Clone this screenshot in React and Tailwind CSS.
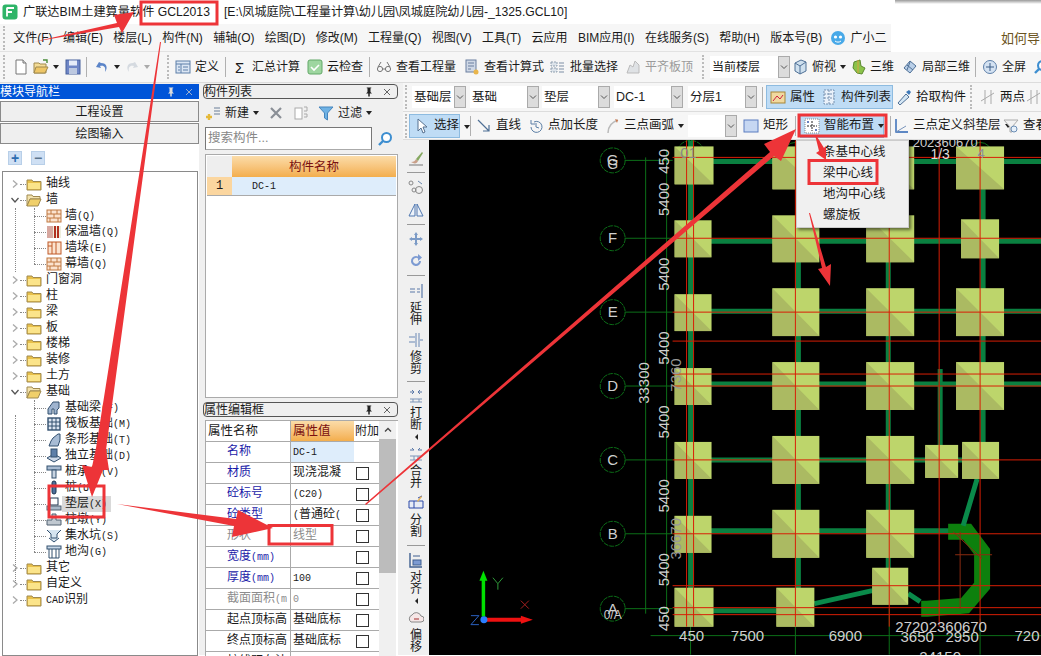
import React from 'react';

// ---- small toolbar / tree icons, all 16x16
function Ic({ n, c = 'w-4 h-4' }) {
  const p = {
    folder: <><path d="M1 4h5l1 1.500h8v8.500H1z" fill="#e8c04a" stroke="#a08a50" /><path d="M2 7h12v6H2z" fill="#fbe48a" /></>,
    folderOpen: <><path d="M1 3h5l1 1.500h7V7H4L1 14z" fill="#f3e2ac" stroke="#a08a50" /><path d="M4 7h11l-3 7H1z" fill="#f0cf6a" stroke="#a08a50" /></>,
    brick: <><rect x="1" y="2" width="14" height="12" fill="#fbe3cf" stroke="#c07840" /><path d="M1 6h14M1 10h14M5 2v4M11 2v4M8 6v4M4 10v4M12 10v4" stroke="#c07840" fill="none" /></>,
    insul: <><rect x="1" y="2" width="14" height="12" fill="#eed" /><rect x="1" y="2" width="6" height="12" fill="#d7a8a0" /><path d="M9 2v12M12 2v12" stroke="#b03020" strokeWidth="2" /></>,
    pier: <><rect x="2" y="2" width="13" height="12" fill="#fbe3cf" stroke="#c05a28" /><path d="M6 2v12M10 2v12M2 6h4" stroke="#c05a28" /></>,
    beam: <><path d="M2 14V9l5-7h6v6l-2 2v4H8V9H6v5z" fill="#9fb4cf" stroke="#33506f" /></>,
    raft: <><rect x="2" y="2" width="12" height="12" fill="#dde6f2" stroke="#33506f" strokeWidth="1.400" /><path d="M6 2v12M10 2v12M2 6h12M2 10h12" stroke="#33506f" /></>,
    strip: <><path d="M3 14l2-5 2-3 5-4h2v6l-2 6z" fill="#a8bcd4" stroke="#33506f" /></>,
    iso: <><path d="M1 10l7-4 7 4-7 4z" fill="#cbd8e8" stroke="#33506f" /><rect x="5" y="1" width="6" height="8" fill="#5d7fa8" stroke="#33506f" /></>,
    cap: <><rect x="1" y="2" width="14" height="4" fill="#a9bcd2" stroke="#33506f" /><rect x="6" y="6" width="4" height="8" fill="#c8d4e2" stroke="#33506f" /></>,
    pile: <><rect x="6" y="1" width="4" height="13" rx="2" fill="#4d6f9a" stroke="#1e3550" /></>,
    pad: <><rect x="4" y="2" width="8" height="7" fill="#fff" stroke="#1e3550" /><rect x="1" y="10" width="14" height="4" fill="#a8b8c8" stroke="#506070" /></>,
    pier2: <><path d="M6 2h4v6h5v5H1V8h5z" fill="#c0c8d0" stroke="#506070" /></>,
    pit: <><path d="M1 2l4 4v4h6V6l4-4M3 10l5 4 5-4" fill="#d5e4f0" stroke="#33506f" /></>,
    ditch: <><rect x="1" y="2" width="14" height="3" fill="#c8d8e8" stroke="#33506f" /><path d="M3 5v9h10V5M6 5v9M10 5v9" fill="none" stroke="#33506f" /></>,
    page: <><path d="M3 1h7l3 3v11H3z" fill="#fff" stroke="#777" /><path d="M10 1v3h3" fill="#ddd" stroke="#777" /></>,
    open: <><path d="M1 4h5l1 1h6v9H1z" fill="#f4dc96" stroke="#a08a50" /><path d="M3 8h12l-3 6H1z" fill="#eec667" stroke="#a08a50" /><path d="M10 1h4v3" fill="none" stroke="#4a8c3a" strokeWidth="1.400" /></>,
    save: <><rect x="1" y="1" width="14" height="14" fill="#6f86c6" stroke="#47609c" /><rect x="4" y="1.500" width="8" height="5" fill="#e6ecf8" /><rect x="4" y="9" width="8" height="6" fill="#bcc8e0" /></>,
    undo: <><path d="M5 3l-3 5 5 1-1-2c4-1 6 1 5 6 3-4 2-9-4-9z" fill="#5b84c8" /></>,
    redo: <><path d="M11 3l3 5-5 1 1-2c-4-1-6 1-5 6-3-4-2-9 4-9z" fill="#d5dae0" /></>,
    def: <><rect x="1" y="2" width="14" height="12" fill="#dbe6f4" stroke="#5d7fa8" /><path d="M1 5h14M6 5v9M3 8h2M3 11h2M8 8h5M8 11h5" stroke="#5d7fa8" fill="none" /></>,
    cloud: <><rect x="1" y="1" width="14" height="14" rx="2" fill="#9ed6a0" stroke="#63a868" /><path d="M4 8l3 3 5-5" stroke="#fff" strokeWidth="1.600" fill="none" /></>,
    glasses: <><circle cx="4" cy="10" r="2.600" fill="none" stroke="#777" /><circle cx="12" cy="10" r="2.600" fill="none" stroke="#777" /><path d="M6 10h4M2 8l3-5M14 8l-3-5" stroke="#777" fill="none" /></>,
    calc: <><rect x="2" y="1" width="10" height="12" fill="#cfd8e6" stroke="#6b7f9f" /><path d="M4 4h6M4 7h6M4 10h3" stroke="#6b7f9f" /><circle cx="12" cy="13" r="2.500" fill="#e9b54b" /></>,
    batch: <><path d="M1 3h6v4H1zM1 9h6v4H1z" fill="#dce3ea" stroke="#90a0b0" strokeDasharray="2 1" /><path d="M9 4h5M9 7h5M9 10h5M9 13h5" stroke="#7d8ea5" /></>,
    level: <><path d="M2 14l3-8 3 2 2-6 4 4v8z" fill="#dfe2e5" stroke="#bbb" /></>,
    box: <><path d="M3 4l6-3 5 2v9l-6 3-5-3z" fill="#cfe0ee" stroke="#4f7096" /><path d="M3 4l5 3v8M8 7l6-4" stroke="#4f7096" fill="none" /></>,
    d3: <><path d="M4 3l6-2 1 6 4 2-3 6-5-1-4-5z" fill="#8bc34a" stroke="#5c8a30" /><path d="M8 1v13" stroke="#d9a441" /></>,
    part: <><path d="M2 9l6-7 6 5-6 7z" fill="#b9cfe8" stroke="#4f7096" /><path d="M5 6l6 5M8 3l-3 8" stroke="#4f7096" fill="none" /></>,
    full: <><circle cx="8" cy="8" r="6.500" fill="#d4e2f2" stroke="#5d7fa8" /><path d="M8 4v8M4 8h8" stroke="#3d5f88" /></>,
    attr: <><rect x="1" y="3" width="14" height="11" fill="#f1d99f" stroke="#a78537" /><path d="M3 12l4-5 3 3 3-4" stroke="#c24" fill="none" /></>,
    list: <><rect x="3" y="1" width="10" height="14" fill="#eaf1fa" stroke="#7590b0" strokeDasharray="2 1" /><path d="M8 1v14M3 5h10M3 9h10" stroke="#7590b0" strokeDasharray="2 1" /></>,
    pick: <><path d="M2 14l8-9 3 3-9 8z" fill="#d4e6f4" stroke="#4f7096" /><path d="M10 3l3-2 2 2-2 3z" fill="#3d78b8" /></>,
    twop: <><path d="M1 12L14 4M5 1v14M11 1v14" stroke="#aaa" fill="none" /></>,
    arrow: <><path d="M4 1v12l3-3 2 5 2-1-2-5h4z" fill="#fff" stroke="#56708f" /></>,
    line: <><path d="M2 2l11 11M13 7v6H7" stroke="#4f7096" strokeWidth="1.200" fill="none" /></>,
    ext: <><path d="M3 9a5.500 5.500 0 1 0 3-5" stroke="#5c7fa5" fill="none" /><path d="M8 5v4l3 1M3 2v4h4" stroke="#5c7fa5" fill="none" /></>,
    arc: <><path d="M4 15C4 8 8 4 14 2" stroke="#bbb" strokeWidth="1.600" fill="none" /><path d="M11 1l3 1-1 3" fill="#c97a50" /></>,
    rect: <><rect x="1" y="2" width="14" height="12" fill="#c6d7f2" stroke="#5b7cc0" /></>,
    smart: <><rect x="1" y="1" width="14" height="14" fill="#fff" stroke="#888" strokeDasharray="1 1" /><path d="M8 3v10M3 8h10" stroke="#222" strokeDasharray="2 1" /><circle cx="4" cy="4" r="1" fill="#35a" /><circle cx="12" cy="12" r="1" fill="#35a" /></>,
    slope: <><path d="M3 1v13h12" stroke="#2c64b4" strokeWidth="1.400" fill="none" /><path d="M3 14L13 8" stroke="#7a95bc" fill="none" /></>,
    view: <><path d="M1 2h14L9 9v5H7V9z" fill="#f2f2f2" stroke="#aaa" /><circle cx="11" cy="11" r="3" fill="#e6f0fa" stroke="#6a8db5" /></>,
    add: <><path d="M9 3h6M9 6h6M9 9h6" stroke="#6a7f98" /><path d="M4 9v6M1 12h6" stroke="#e5b93a" strokeWidth="2.400" /></>,
    del: <><path d="M3 3l10 10M13 3L3 13" stroke="#8a8f96" strokeWidth="2.200" /></>,
    copy: <><rect x="2" y="3" width="7" height="11" fill="#fff" stroke="#aaa" /><path d="M11 2h3v4h-3M11 9h3v3h-3" fill="none" stroke="#aaa" /></>,
    filter: <><path d="M1 2h14L9.500 8v7l-3-2V8z" fill="#6fb2e4" stroke="#4585bd" /></>,
    search: <><circle cx="9.500" cy="6.500" r="4.500" fill="#fff" stroke="#3d8ed0" strokeWidth="2" /><path d="M6 10l-4 4" stroke="#3d8ed0" strokeWidth="2.400" /></>,
    brush: <><path d="M3 12c3 0 4-1 5-3l2 2c-1 3-4 3-7 1z" fill="#c9a08a" /><path d="M8 9l6-7 1 1-5 8z" fill="#85a860" /><path d="M1 15h14" stroke="#777" /></>,
    circles: <><circle cx="3" cy="4" r="2" fill="none" stroke="#888" /><circle cx="11" cy="11" r="3.500" fill="none" stroke="#888" /><circle cx="6" cy="11" r="2" fill="none" stroke="#888" /><path d="M10 2l4 3" stroke="#6a88ad" /></>,
    mirror: <><path d="M7 2v12H1zM9 2v12h6z" fill="#eef3fa" stroke="#4f77b0" /></>,
    move: <><path d="M8 1l2 3H9v3h3V6l3 2-3 2V9H9v3h1l-2 3-2-3h1V9H4v1L1 8l3-2v1h3V4H6z" fill="#7c9bc6" /></>,
    rotate: <><path d="M13 8a5 5 0 1 1-3-4.600V1l4 3.500L10 8V5.600A3 3 0 1 0 11 8z" fill="#7d9bd2" /></>,
    extend: <><path d="M14 1v14M2 6h5M2 9h5M9 6h3M9 9h3" stroke="#5a78a8" strokeWidth="1.200" fill="none" /></>,
    trim: <><path d="M8 1v14M11 1v14M1 5h6M1 10h6M12 8h3" stroke="#6a88b5" fill="none" /></>,
    brk: <><path d="M2 11h12M2 14h12M5 11v3M11 11v3" stroke="#7d95b8" /><path d="M2 4h4M10 4h4M6 4l-2-2M6 4L4 6M10 4l2-2M10 4l2 2" stroke="#5a78a8" fill="none" /></>,
    merge: <><path d="M2 10h12M2 14h12M6 10v4M10 10v4" stroke="#7d95b8" /><path d="M2 4h4l-2-2M14 4h-4l2-2" stroke="#5a78a8" fill="none" /></>,
    split: <><path d="M1 6h14v7H1z" fill="#e8ecf5" stroke="#2b48a8" /><path d="M6 6v7M10 3l4-2" stroke="#2b48a8" /><path d="M9 6l4-5 1 1-4 5z" fill="#e6b45a" /></>,
    align: <><path d="M2 1v14h12" stroke="#3f5f90" strokeWidth="1.400" fill="none" /><rect x="5" y="8" width="8" height="5" fill="#7d9bd2" stroke="#3f5f90" /><path d="M5 4h7" stroke="#3f5f90" /></>,
    offset: <><path d="M3 12a4 4 0 0 1 1-7 5 5 0 0 1 9 1 3 3 0 0 1 0 6z" fill="#f5e6e6" stroke="#888" /><path d="M6 9h5" stroke="#c88" strokeWidth="2" /></>,
    bot: <><circle cx="8" cy="8" r="7" fill="#48a9e8" /><circle cx="5.500" cy="7" r="1.600" fill="#fff" /><circle cx="10.500" cy="7" r="1.600" fill="#fff" /><path d="M5 11c2 1.500 4 1.500 6 0" stroke="#fff" fill="none" /></>,
    logo: <><rect x="0.500" y="0.500" width="15" height="15" rx="3" fill="#2fb568" /><path d="M5 3.500v9M5 4h7M5 8h5" stroke="#fff" strokeWidth="1.800" fill="none" /></>,
    pin: <><path d="M5 2h6v1H10v5l2 2H9v4H7v-4H4l2-2V3H5z" fill="#222" /></>,
    close: <><path d="M4 4l8 8M12 4l-8 8" stroke="#333" /></>,
  };
  return <svg viewBox="0 0 16 16" className={`${c} shrink-0`}>{p[n]}</svg>;
}

// little solid dropdown triangle
const Caret = ({ gray }) => <span className={`inline-block shrink-0 border-x-[3.5px] border-t-[4px] border-x-transparent ${gray ? 'border-t-[#aaa]' : 'border-t-[#222]'}`} />;

const Sep = ({ w = 'w-px' }) => <div className={`h-5 shrink-0 ${w}`}><div className="w-px h-full bg-[#b0b0b0]" /></div>;
const Grip = ({ w = 'w-[2px]' }) => <div className={`h-6 shrink-0 ${w}`}><div className="h-full w-0 border-l-2 border-dotted border-[#bbb]" /></div>;

// toolbar button, w is the slot it takes in the row
function Tool({ icon, label, caret, w, gray }) {
  return (
    <div className={`flex items-center gap-1 shrink-0 whitespace-nowrap ${w || ''} ${gray ? 'text-[#9a9a9a]' : ''}`}>
      {icon && <Ic n={icon} />}
      {label && <span>{label}</span>}
      {caret && <Caret gray={gray} />}
    </div>
  );
}

function Combo({ label, w }) {
  return (
    <div className={`flex items-center h-[22px] bg-white shrink-0 ${w}`}>
      <span className="flex-1 pl-0.5 whitespace-nowrap overflow-hidden">{label}</span>
      <span className="w-[12px] h-[22px] bg-[#dcdcdc] border border-[#aaa] flex items-center justify-center">
        <svg viewBox="0 0 8 8" className="w-2 h-2"><path d="M1 2.500l3 3 3-3" fill="none" stroke="#555" /></svg>
      </span>
    </div>
  );
}

// ascii is half width in the old bitmap font, so it gets a smaller size
function Mono({ t }) {
  return t.split(/([\x20-\x7e]+)/).map((s, i) => (i % 2 ? <span key={i} className="text-[10px]">{s}</span> : s));
}

const menus = ['文件(F)', '编辑(E)', '楼层(L)', '构件(N)', '辅轴(O)', '绘图(D)', '修改(M)', '工程量(Q)', '视图(V)', '工具(T)', '云应用', 'BIM应用(I)', '在线服务(S)', '帮助(H)', '版本号(B)'];

const tree = [
  [0, '轴线'], [0, '墙', 1], [1, '墙(Q)', 'brick'], [1, '保温墙(Q)', 'insul'], [1, '墙垛(E)', 'pier'], [1, '幕墙(Q)', 'brick'],
  [0, '门窗洞'], [0, '柱'], [0, '梁'], [0, '板'], [0, '楼梯'], [0, '装修'], [0, '土方'], [0, '基础', 1],
  [1, '基础梁(F)', 'beam'], [1, '筏板基础(M)', 'raft'], [1, '条形基础(T)', 'strip'], [1, '独立基础(D)', 'iso'], [1, '桩承台(V)', 'cap'],
  [1, '桩(U)', 'pile'], [1, '垫层(X)', 'pad', 1], [1, '柱墩(Y)', 'pier2'], [1, '集水坑(S)', 'pit'], [1, '地沟(G)', 'ditch'],
  [0, '其它'], [0, '自定义'], [0, 'CAD识别'],
];

function TreeRow({ row }) {
  const [lvl, label, extra, sel] = row;
  if (lvl === 0) {
    return (
      <div className="h-4 flex items-center">
        <svg viewBox="0 0 8 8" className="w-2 h-2 ml-[8px] shrink-0">
          {extra ? <path d="M0.500 2l3.500 4 3.500-4" fill="none" stroke="#555" strokeWidth="1.300" /> : <path d="M2 0.500l4 3.500-4 3.500" fill="none" stroke="#aaa" strokeWidth="1.300" />}
        </svg>
        <span className="w-[6px] ml-px border-t border-dotted border-[#888]" />
        <Ic n={extra ? 'folderOpen' : 'folder'} />
        <span className="ml-[4px]"><Mono t={label} /></span>
      </div>
    );
  }
  return (
    <div className="h-4 flex items-center pl-[31px]">
      <span className="w-3 border-t border-dotted border-[#888]" />
      <Ic n={extra} />
      <span className={`pl-[3px] pr-1 h-4 flex items-center ${sel ? 'bg-[#d9d9d9]' : ''}`}><span><Mono t={label} /></span></span>
    </div>
  );
}

function PanelHead({ title, blue }) {
  return (
    <div className={`h-[15px] flex items-center justify-between shrink-0 ${blue ? 'bg-[#0054d8] text-white' : 'bg-[#efefef] border border-[#555] rounded-sm'}`}>
      <span>{title}</span>
      <div className={`flex items-center gap-1.5 pr-1 ${blue ? 'invert' : ''}`}>
        <Ic n="pin" c="w-3 h-3" />
        <Ic n="close" c="w-3 h-3" />
      </div>
    </div>
  );
}

const props = [
  ['名称', 'DC-1', 'b', true, true], ['材质', '现浇混凝', 'b'], ['砼标号', '(C20)', 'b'], ['砼类型', '(普通砼(', 'b'], ['形状', '线型', 'g'],
  ['宽度(mm)', '', 'b'], ['厚度(mm)', '100', 'b'], ['截面面积(m', '0', 'g'], ['起点顶标高', '基础底标', 'k'], ['终点顶标高', '基础底标', 'k'], ['桩线距布法', '', 'k'],
];

function VTool({ icon, text, caret }) {
  return (
    <div className="flex flex-col items-center shrink-0 leading-[12px]">
      <Ic n={icon} />
      {text && <div className="mt-[3px] flex flex-col items-center">{text.split('').map((t) => <span key={t}>{t}</span>)}</div>}
      {caret && <span className="mt-[3px] border-y-[3px] border-r-[3px] border-y-transparent border-r-[#222]" />}
    </div>
  );
}
const VSep = () => <div className="w-[18px] h-px bg-[#999] shrink-0" />;

// ---- the drawing area, coordinates are page pixels via viewBox
const SQ = [
  [674, 147, 39, 38], [674, 221, 37, 37], [674, 295, 37, 37], [674, 369, 37, 37], [674, 443, 37, 37], [674, 517, 37, 37], [674, 589, 39, 39],
  [772, 147, 47, 43], [772, 216, 47, 47], [772, 289, 47, 48], [772, 363, 47, 48], [772, 437, 47, 48], [772, 511, 47, 48], [776, 589, 38, 39],
  [866, 147, 48, 43], [866, 216, 48, 47], [866, 289, 48, 48], [866, 363, 48, 48], [866, 437, 48, 48], [866, 511, 48, 48], [872, 569, 36, 37],
  [956, 147, 48, 43], [961, 220, 38, 39], [956, 289, 48, 48], [956, 363, 48, 48], [962, 443, 37, 37], [925, 446, 33, 33],
];
const BEAMS = [[690, 141, 690, 612], [798, 190, 798, 590], [888, 190, 888, 570], [983, 190, 983, 445], [940, 370, 940, 461],
  [700, 162, 1041, 162], [700, 242, 1041, 242], [700, 312, 1041, 312], [700, 385, 1041, 385], [700, 461, 962, 461], [700, 532, 960, 532], [700, 612, 776, 612]];
const REDH = [158, 239, 313, 342, 375, 387, 461, 535, 587, 609, 616];
const REDV = [686, 693, 795, 889, 939, 980];
const AXES = [['G', 161], ['F', 239], ['E', 313], ['D', 387], ['C', 461], ['B', 535], ['A', 610]];
const DIM = [['450', 162], ['5400', 200], ['5400', 275], ['5400', 349], ['5400', 423], ['5400', 497], ['5400', 571], ['450', 620]];
const BOT = [['450', 691, 637], ['7500', 747, 637], ['6900', 845, 637], ['27202360670', 941, 628], ['3650', 917, 638], ['2950', 962, 638], ['720', 1027, 637], ['24150', 940, 658]];

function Drawing() {
  return (
    <svg viewBox="428 141 613 515" className="flex-1 min-w-0 h-full bg-black">
      <g stroke="#0c6f18" fill="none">
        <path d="M624 161H672M624 239H672M624 313H672M624 387H672M624 461H672M624 535H672M624 610H672M645 158V615M666 150V620" />
        <path d="M690 625V656M795 628V656M889 610V656M980 620V656M650 637H1041" />
        {AXES.map(([t, y]) => <circle key={t} cx="612" cy={y} r="12.500" strokeDasharray="5 1" />)}
        <circle cx="690" cy="155" r="14" strokeDasharray="5 1" /><circle cx="795" cy="155" r="12" /><circle cx="980" cy="155" r="12" />
      </g>
      {BEAMS.map(([a, b, c, d], i) => <line key={i} x1={a} y1={b} x2={c} y2={d} stroke="#0a8040" strokeWidth="5" />)}
      <path d="M948 533H967L982 553V587L965 607L927 610H921" fill="none" stroke="#0d800d" strokeWidth="16" />
      <path d="M977 480L963 527M814 605L872 592M908 595L920 603" stroke="#0a8a4a" strokeWidth="5" fill="none" />
      {SQ.map(([x, y, w, h], i) => (
        <g key={i}>
          <rect x={x} y={y} width={w} height={h} fill="#bdd56b" />
          <path d={`M${x} ${y}V${y + h}H${x + w}z`} fill="#abba62" />
        </g>
      ))}
      <g stroke="#d81e05" strokeWidth="1">
        {REDH.map((y) => <line key={y} x1="672" y1={y} x2="1041" y2={y} />)}
        {REDV.map((x) => <line key={x} x1={x} y1="141" x2={x} y2="628" />)}
        <path d="M960 533V610M953 533L982 560M955 556H992" fill="none" stroke="#8a2a10" />
      </g>
      <g fill="#cfcfcf" className="font-['Liberation_Sans',sans-serif]" fontSize="15">
        {AXES.map(([t, y]) => <text key={t} x="612" y={y + 5} textAnchor="middle">{t}</text>)}
        <text x="612" y="170" textAnchor="middle" fontSize="14">G</text>
        <text x="612" y="620" textAnchor="middle" fontSize="12">0/A</text>
        {DIM.map(([t, y], i) => <text key={i} transform={`translate(668 ${y}) rotate(-90)`} textAnchor="middle">{t}</text>)}
        <text transform="translate(648 384) rotate(-90)" textAnchor="middle">33300</text>
        <text transform="translate(680 376) rotate(-90)" textAnchor="middle" fill="#999">7360</text>
        <text transform="translate(680 540) rotate(-90)" textAnchor="middle" fill="#999">36670</text>
        {BOT.map(([t, x, y], i) => <text key={i} x={x} y={y + 5} textAnchor="middle">{t}</text>)}
        <text x="688" y="159" textAnchor="middle" fill="#888">01</text>
        <text x="981" y="159" textAnchor="middle" fill="#8b8fa0" fontSize="13">4</text>
        <text x="940" y="160" textAnchor="middle" fill="#ddd" fontSize="14">1/3</text>
        <text x="945" y="148" textAnchor="middle" fill="#ccc" fontSize="13">202360670</text>
      </g>
      {/* ucs marker */}
      <path d="M482.500 618V580" stroke="#00e000" strokeWidth="3.500" />
      <path d="M482.500 572l-4 10h8z" fill="#00e000" />
      <path d="M483 621H522" stroke="#ee1111" strokeWidth="4" />
      <path d="M532 621l-12-4v8z" fill="#ee1111" />
      <circle cx="483" cy="621" r="3.500" fill="#2a7fff" />
      <path d="M492 579l5 6 5-6M497 585v6" stroke="#2f9a3a" fill="none" />
      <path d="M520 602l8 8M528 602l-8 8" stroke="#a82020" fill="none" />
      <path d="M470 617h8l-8 9h8" stroke="#2a60c0" fill="none" />
    </svg>
  );
}

export default function App() {
  return (
    <div className="relative w-[1041px] h-[656px] overflow-hidden bg-white text-[12px] leading-none text-[#1a1a1a] font-['Liberation_Sans','Noto_Sans_CJK_SC',sans-serif]">
      {/* title */}
      <div className="h-[24px] flex items-center pl-[2px] bg-white text-[12.2px] whitespace-nowrap">
        <Ic n="logo" />
        <span className="ml-[5px]">广联达BIM土建算量软件 GCL2013</span>
        <span className="ml-[14px]">[E:\凤城庭院\工程量计算\幼儿园\凤城庭院幼儿园-_1325.GCL10]</span>
      </div>
      <div className="absolute left-[895px] top-0 right-0 h-[4px] bg-linear-to-b from-[#9a9a9a] to-white" />
      {/* menu */}
      <div className="h-[28px] flex items-center">
        <div className="w-[891px] h-full flex items-center gap-[10.3px] shrink-0 pl-[3px] bg-[#f6f6f6] border-b border-[#e2e2e2]">
          <Grip w="w-[0px]" />
          {menus.map((m) => <span key={m} className="shrink-0 first:ml-[0px]">{m}</span>)}
          <span className="flex items-center gap-1 shrink-0 ml-[-2px]"><Ic n="bot" />广小二</span>
        </div>
        <span className="ml-[110px] shrink-0 whitespace-nowrap text-[13px] text-[#6b5320]">如何导出</span>
      </div>
      <div className="h-[31px] flex items-center pl-[3px] bg-[#f6f6f6] border-b border-[#dcdcdc]">
        <Grip w="w-[10px]" />
        <Tool icon="page" w="w-[20px]" />
        <Tool icon="open" caret w="w-[32px]" />
        <Tool icon="save" w="w-[21px]" />
        <Sep w="w-[8px]" />
        <Tool icon="undo" caret w="w-[30px]" />
        <Tool icon="redo" caret gray w="w-[43px]" />
        <Grip w="w-[8px]" />
        <Tool icon="def" label="定义" w="w-[50px]" />
        <Sep w="w-[10px]" />
        <span className="w-[17px] text-[15px] shrink-0">Σ</span>
        <Tool label="汇总计算" w="w-[55px]" />
        <Tool icon="cloud" label="云检查" w="w-[62px]" />
        <Sep w="w-[7px]" />
        <Tool icon="glasses" label="查看工程量" w="w-[88px]" />
        <Tool icon="calc" label="查看计算式" w="w-[86px]" />
        <Tool icon="batch" label="批量选择" w="w-[75px]" />
        <Tool icon="level" label="平齐板顶" gray w="w-[77px]" />
        <Grip w="w-[8px]" />
        <div className="w-[82px] shrink-0"><Combo label="当前楼层" w="w-[80px]" /></div>
        <Tool icon="box" label="俯视" caret w="w-[58px]" />
        <Tool icon="d3" label="三维" w="w-[52px]" />
        <Tool icon="part" label="局部三维" w="w-[73px]" />
        <Sep w="w-[7px]" />
        <Tool icon="full" label="全屏" w="w-[51px]" />
        <Ic n="search" />
      </div>

      <div className="flex h-[572px] bg-[#f0f0f0]">
        {/* module nav */}
        <div className="w-[199px] h-full flex flex-col shrink-0 mt-[1px] bg-white">
          <PanelHead title="模块导航栏" blue />
          <div className="h-[21px] mt-[2px] flex items-center justify-center bg-[#efefef] border border-[#8a8a8a]">工程设置</div>
          <div className="h-[21px] mt-px flex items-center justify-center bg-[#efefef] border border-[#8a8a8a]">绘图输入</div>
          <div className="h-[27px] flex items-center gap-[9px] pl-2 shrink-0">
            <span className="w-[14px] h-[14px] bg-[#cfe0f4] border border-[#b8cfe8] flex items-center justify-center text-[#2b6cb0] text-[14px] font-bold">+</span>
            <span className="w-[14px] h-[14px] bg-[#cfe0f4] border border-[#b8cfe8] flex items-center justify-center text-[#5b7590] text-[14px] font-bold">−</span>
          </div>
          <div className="relative flex-1 ml-[2px] mr-[1px] border border-[#8a8a8a] pt-[1px] font-['Liberation_Mono','Noto_Sans_CJK_SC',monospace]">
            <div className="h-[3px]" />
            <span className="absolute left-[12px] top-[36px] h-[64px] border-l border-dotted border-[#888]" />
            <span className="absolute left-[12px] top-[243px] h-[168px] border-l border-dotted border-[#888]" />
            <span className="absolute left-[31px] top-[36px] h-[56px] border-l border-dotted border-[#888]" />
            <span className="absolute left-[31px] top-[228px] h-[152px] border-l border-dotted border-[#888]" />
            {tree.map((r) => <TreeRow key={r[1]} row={r} />)}
          </div>
        </div>

        {/* component list + properties */}
        <div className="w-[195px] ml-[4px] mt-[1px] flex flex-col shrink-0 h-full">
          <div className="h-[314px] flex flex-col shrink-0">
            <PanelHead title="构件列表" />
            <div className="h-[28px] flex items-center gap-[9px] pl-[2px] shrink-0">
              <Tool icon="add" label="新建" caret />
              <Ic n="del" />
              <Ic n="copy" />
              <Tool icon="filter" label="过滤" caret />
            </div>
            <div className="h-[23px] flex shrink-0 ml-[2px]">
              <div className="w-[167px] bg-white border border-[#777] border-b-[#aaa] flex items-center pl-[2px] text-[#888] text-[12.5px]">搜索构件...</div>
              <div className="flex-1 flex items-center justify-center"><Ic n="search" /></div>
            </div>
            <div className="flex-1 mt-[4px] ml-[2px] bg-white border border-[#aaa] p-px font-['Liberation_Mono','Noto_Sans_CJK_SC',monospace]">
              <div className="flex h-[21px]">
                <div className="w-[25px] bg-[#eee]" />
                <div className="flex-1 bg-linear-to-b from-[#fbdca8] to-[#f3ae4c] flex items-center justify-center text-[#7a1010] text-[12.5px] font-['Noto_Sans_CJK_SC',sans-serif]">构件名称</div>
              </div>
              <div className="flex h-[19px] border-b border-[#aaa]">
                <div className="w-[25px] bg-[#fbd69f] flex items-center justify-center">1</div>
                <div className="flex-1 bg-[#deedfb] flex items-center pl-5"><span><Mono t="DC-1" /></span></div>
              </div>
            </div>
          </div>
          <div className="h-[4px] shrink-0" />
          <PanelHead title="属性编辑框" />
          <div className="flex-1 mt-[3px] ml-[2px] bg-white border-l border-t border-[#aaa] flex overflow-hidden">
            <div className="w-[173px] shrink-0">
              <div className="flex h-[21px] border-b border-[#aaa]">
                <div className="w-[85px] flex items-center pl-[2px] border-r border-[#aaa] text-[12.5px]">属性名称</div>
                <div className="w-[63px] flex items-center pl-[2px] bg-linear-to-b from-[#fbdca8] to-[#f3ae4c] text-[#7a1010] text-[12.5px]">属性值</div>
                <div className="flex-1 flex items-center pl-px overflow-hidden whitespace-nowrap">附加</div>
              </div>
              {props.map(([n, v, t, first, sel]) => (
                <div key={n} className="flex h-[21px] border-b border-[#aaa] font-['Liberation_Mono','Noto_Sans_CJK_SC',monospace]">
                  <div className={`w-[85px] flex items-center pl-[21px] border-r border-[#aaa] whitespace-nowrap overflow-hidden ${t === 'b' ? 'text-[#1a1aa8]' : t === 'g' ? 'text-[#8c8c8c]' : ''}`}><span><Mono t={n} /></span></div>
                  <div className={`w-[63px] flex items-center pl-[2px] whitespace-nowrap overflow-hidden ${sel ? 'bg-[#deedfb]' : ''} ${t === 'g' ? 'text-[#8c8c8c]' : ''}`}><span><Mono t={v} /></span></div>
                  <div className="flex-1 flex items-center pl-[2px]">{!first && <span className="w-[13px] h-[13px] bg-white border border-[#333]" />}</div>
                </div>
              ))}
            </div>
            <div className="w-[17px] flex flex-col shrink-0 bg-[#f0f0f0]">
              <div className="h-[18px] flex items-center justify-center">
                <svg viewBox="0 0 8 8" className="w-2 h-2"><path d="M1 5.500l3-3 3 3" fill="none" stroke="#444" strokeWidth="1.300" /></svg>
              </div>
              <div className="h-[134px] bg-[#bcbcbc]" />
            </div>
          </div>
        </div>

        {/* draw side */}
        <div className="flex-1 min-w-0 ml-[5px] flex flex-col">
          <div className="h-[29px] flex items-center pl-[2px] bg-[#f6f6f6] border-b border-[#dcdcdc] shrink-0 text-[12.5px] whitespace-nowrap">
            <Grip w="w-[7px]" />
            <Combo label="基础层" w="w-[54px] mr-[4px]" />
            <Combo label="基础" w="w-[69px] mr-[3px]" />
            <Combo label="垫层" w="w-[68px] mr-[4px]" />
            <Combo label="DC-1" w="w-[69px] mr-[5px]" />
            <Combo label="分层1" w="w-[69px] mr-[5px]" />
            <Sep w="w-[4px]" />
            <div className="flex h-[24px] w-[127px] mr-[3px] shrink-0 bg-[#bfdcf5] border border-[#8dbbe0]">
              <div className="flex items-center gap-1 px-[3px] w-[51px]"><Ic n="attr" />属性</div>
              <div className="flex items-center gap-1 px-[3px]"><Ic n="list" />构件列表</div>
            </div>
            <Tool icon="pick" label="拾取构件" w="w-[74px]" />
            <Grip w="w-[10px]" />
            <Tool icon="twop" label="两点" w="w-[46px]" />
            <Ic n="twop" />
          </div>
          <div className="h-[28px] flex items-center pl-[2px] bg-[#f6f6f6] border-b border-[#dcdcdc] shrink-0 text-[12.5px] whitespace-nowrap">
            <Grip w="w-[4px]" />
            <div className="h-[24px] w-[51px] mr-[4px] bg-[#bfdcf5] border border-[#8dbbe0] flex items-center gap-1 px-1 shrink-0"><Ic n="arrow" />选择</div>
            <div className="w-[6px] shrink-0"><Caret /></div>
            <Sep w="w-[6px]" />
            <Tool icon="line" label="直线" w="w-[52px]" />
            <Tool icon="ext" label="点加长度" w="w-[76px]" />
            <Tool icon="arc" label="三点画弧" caret w="w-[84px]" />
            <Combo label="" w="w-[49px] mr-[6px]" />
            <Tool icon="rect" label="矩形" w="w-[52px]" />
            <Sep w="w-[5px]" />
            <div className="h-[24px] w-[84px] mr-[6px] bg-[#bfdcf5] border border-[#8dbbe0] flex items-center gap-1 pl-[3px] shrink-0"><Ic n="smart" />智能布置<Caret /></div>
            <Sep w="w-[3px]" />
            <Tool icon="slope" label="三点定义斜垫层" caret w="w-[110px]" />
            <Tool icon="view" label="查看" />
          </div>
          <div className="flex-1 min-h-0 flex">
            <div className="w-[26px] flex flex-col items-center gap-[6.2px] pt-[10px] bg-[#f0f0f0] overflow-hidden shrink-0">
              <VTool icon="brush" />
              <VSep />
              <VTool icon="circles" />
              <VTool icon="mirror" />
              <VSep />
              <VTool icon="move" />
              <VTool icon="rotate" />
              <VSep />
              <VTool icon="extend" text="延伸" />
              <VTool icon="trim" text="修剪" />
              <VSep />
              <VTool icon="brk" text="打断" caret />
              <VTool icon="merge" text="合并" />
              <VTool icon="split" text="分割" />
              <VSep />
              <VTool icon="align" text="对齐" caret />
              <VTool icon="offset" text="偏移" />
            </div>
            <Drawing />
          </div>
        </div>
      </div>

      {/* dropdown menu over the drawing */}
      <div className="absolute left-[796px] top-[140px] w-[113px] h-[88px] bg-[#f0f0f0] border border-[#ccc] shadow-[2px_2px_3px_rgba(0,0,0,0.5)] pl-[26px] flex flex-col text-[12.5px] pt-[1px]">
        {['条基中心线', '梁中心线', '地沟中心线', '螺旋板'].map((m) => <span key={m} className="h-[21px] flex items-center">{m}</span>)}
      </div>

      {/* red annotations drawn on top of the screenshot */}
      <svg viewBox="0 0 1041 656" className="absolute inset-0 w-[1041px] h-[656px] pointer-events-none">
        <g fill="none" stroke="#ed3438" strokeWidth="3">
          <rect x="141" y="2" width="76" height="22" />
          <rect x="49" y="486" width="55" height="31" />
          <rect x="269" y="525.500" width="63" height="18.500" />
          <rect x="799" y="115" width="87" height="21" />
          <rect x="809" y="160.500" width="68" height="23" />
        </g>
        <g fill="#ed3438">
          <path d="M33 42L117 23L114 15L134 12L122 33L119 27z" />
          <path d="M160 42L161 42L106 450L109 470L103 470L92 497L82 465L92 467L96 448z" />
          <path d="M117 504L236 519L238 510L273 528L232 537L234 526z" />
          <path d="M365 504L770 152L764 144L796 129L781 161L774 156L366 505z" />
          <path d="M815 135L816 135L824 148L826 146L826 160L816 153L819 151z" />
          <path d="M809 213L810 213L826 267L831 264L830 286L818 269L822 268z" />
        </g>
      </svg>
    </div>
  );
}
